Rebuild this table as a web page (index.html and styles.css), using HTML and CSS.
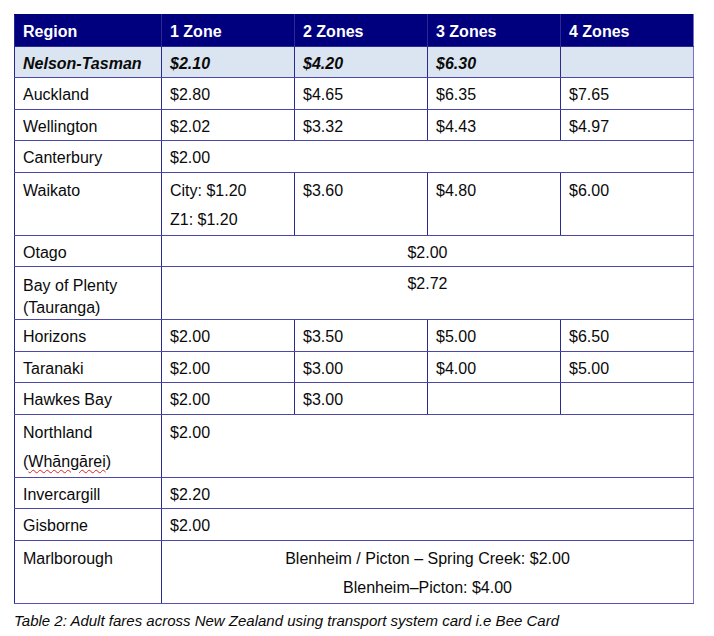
FILE: index.html
```html
<!DOCTYPE html>
<html>
<head>
<meta charset="utf-8">
<link rel="stylesheet" href="styles.css">
</head>
<body>
<table class="fares">
  <colgroup>
    <col class="c-region"><col class="c-zone"><col class="c-zone"><col class="c-zone"><col class="c-zone">
  </colgroup>
  <thead>
    <tr class="head">
      <th>Region</th><th>1 Zone</th><th>2 Zones</th><th>3 Zones</th><th>4 Zones</th>
    </tr>
  </thead>
  <tbody>
    <tr class="hl">
      <td>Nelson-Tasman</td><td>$2.10</td><td>$4.20</td><td>$6.30</td><td></td>
    </tr>
    <tr><td>Auckland</td><td>$2.80</td><td>$4.65</td><td>$6.35</td><td>$7.65</td></tr>
    <tr><td>Wellington</td><td>$2.02</td><td>$3.32</td><td>$4.43</td><td>$4.97</td></tr>
    <tr><td>Canterbury</td><td colspan="4">$2.00</td></tr>
    <tr class="two"><td>Waikato</td><td>City: $1.20<br>Z1: $1.20</td><td>$3.60</td><td>$4.80</td><td>$6.00</td></tr>
    <tr><td>Otago</td><td colspan="4" class="center">$2.00</td></tr>
    <tr class="bop"><td class="tight">Bay of Plenty<br>(Tauranga)</td><td colspan="4" class="center">$2.72</td></tr>
    <tr><td>Horizons</td><td>$2.00</td><td>$3.50</td><td>$5.00</td><td>$6.50</td></tr>
    <tr><td>Taranaki</td><td>$2.00</td><td>$3.00</td><td>$4.00</td><td>$5.00</td></tr>
    <tr><td>Hawkes Bay</td><td>$2.00</td><td>$3.00</td><td></td><td></td></tr>
    <tr class="two"><td>Northland<br>(<span class="spell">Whāngārei</span>)</td><td colspan="4">$2.00</td></tr>
    <tr><td>Invercargill</td><td colspan="4">$2.20</td></tr>
    <tr><td>Gisborne</td><td colspan="4">$2.00</td></tr>
    <tr class="two last"><td>Marlborough</td><td colspan="4" class="center">Blenheim / Picton – Spring Creek: $2.00<br>Blenheim–Picton: $4.00</td></tr>
  </tbody>
</table>
<p class="caption">Table 2: Adult fares across New Zealand using transport system card <span class="spell">i.e</span> Bee Card</p>
</body>
</html>
```

FILE: styles.css
```css
html, body {
  margin: 0;
  padding: 0;
  background: #ffffff;
}
body {
  padding: 14px 0 0 14px;
  font-family: "Liberation Sans", Arial, sans-serif;
  color: #0a0a0a;
}
.fares {
  border-collapse: collapse;
  table-layout: fixed;
  width: 680px;
  font-size: 16px;
}
.c-region { width: 147px; }
.c-zone { width: 133px; }
.fares th,
.fares td {
  text-align: left;
  vertical-align: top;
  padding: 4px 8px 0 8px;
  line-height: 26.5px;
  border-left: 1px solid #2a2a8f;
  border-right: 1px solid #2a2a8f;
  border-top: 1px solid #4c48a8;
  border-bottom: 1px solid #4c48a8;
  white-space: nowrap;
}
.fares td:last-child { border-right-color: #7a72c4; }
.fares th:last-child { border-right-color: #7a72c4; }
.fares td:first-child, .fares th:first-child { border-left-color: #27278c; }
.head th {
  background: #00007e;
  color: #ffffff;
  font-weight: bold;
  border-top-color: #00007e;
  border-bottom-color: #2a2a8f;
}
.hl td {
  background: #dbe5f1;
  font-weight: bold;
  font-style: italic;
}
.fares td.center { text-align: center; }
.two td {
  padding-top: 3px;
  line-height: 29.5px;
}
.fares td.tight {
  padding-top: 8px;
  line-height: 22px;
}
.last td { border-bottom-color: #5a52b0; }
.spell {
  text-decoration: underline wavy #e02020;
  text-decoration-thickness: 1px;
  text-underline-offset: 2px;
}
.caption {
  margin: 8px 0 0 0;
  font-size: 15px;
  font-style: italic;
  color: #0a0a0a;
}
```
